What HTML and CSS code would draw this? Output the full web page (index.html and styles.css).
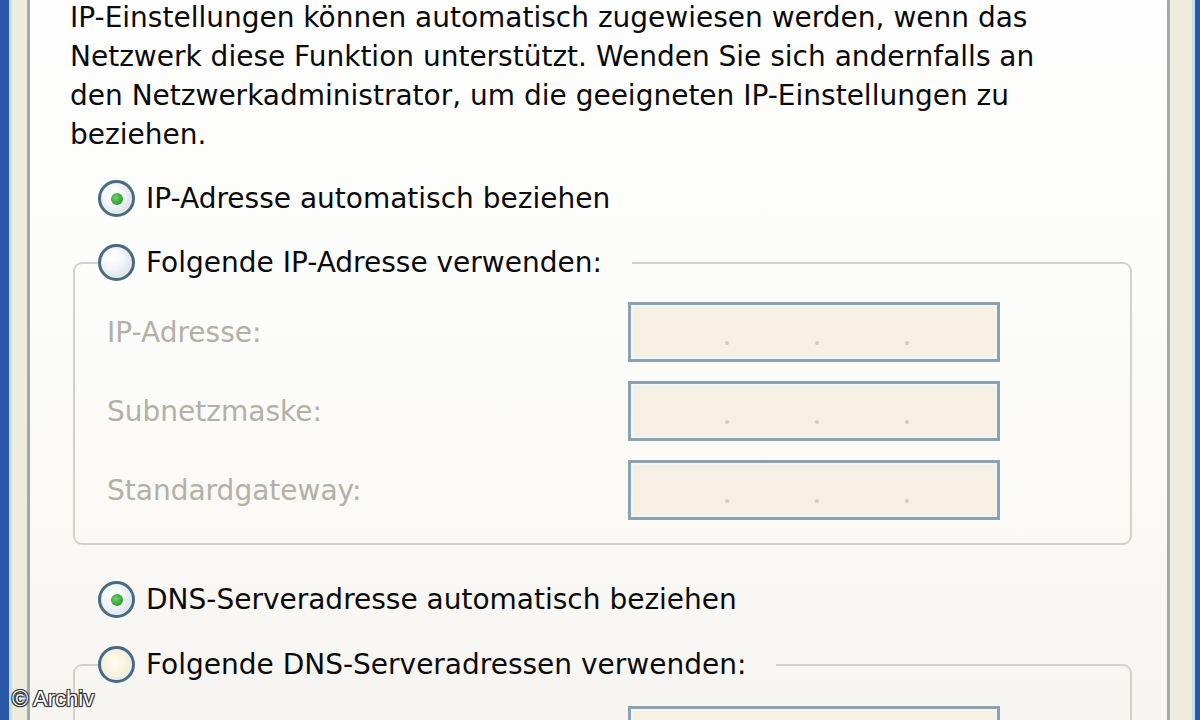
FILE: index.html
```html
<!DOCTYPE html>
<html lang="de">
<head>
<meta charset="utf-8">
<title>Internetprotokoll (TCP/IP)</title>
<link rel="stylesheet" href="styles.css">
</head>
<body>
<div class="outer">
  <div class="frame">
    <main class="page">
      <p class="intro">IP-Einstellungen können automatisch zugewiesen werden, wenn das<br>Netzwerk diese Funktion unterstützt. Wenden Sie sich andernfalls an<br>den Netzwerkadministrator, um die geeigneten IP-Einstellungen zu<br>beziehen.</p>

      <div class="option opt-first"><span class="radio checked"></span><span class="otext">IP-Adresse automatisch beziehen</span></div>

      <fieldset class="group">
        <legend class="option legend"><span class="radio"></span><span class="otext">Folgende IP-Adresse verwenden:</span></legend>
        <div class="fields">
          <span class="flabel">IP-Adresse:</span>
          <div class="ipbox"><span class="seg"></span><span class="dot"></span><span class="seg"></span><span class="dot"></span><span class="seg"></span><span class="dot"></span><span class="seg"></span></div>
          <span class="flabel">Subnetzmaske:</span>
          <div class="ipbox"><span class="seg"></span><span class="dot"></span><span class="seg"></span><span class="dot"></span><span class="seg"></span><span class="dot"></span><span class="seg"></span></div>
          <span class="flabel">Standardgateway:</span>
          <div class="ipbox"><span class="seg"></span><span class="dot"></span><span class="seg"></span><span class="dot"></span><span class="seg"></span><span class="dot"></span><span class="seg"></span></div>
        </div>
      </fieldset>

      <div class="option opt-dns"><span class="radio checked"></span><span class="otext">DNS-Serveradresse automatisch beziehen</span></div>

      <fieldset class="group group-dns">
        <legend class="option legend"><span class="radio hover"></span><span class="otext">Folgende DNS-Serveradressen verwenden:</span></legend>
        <div class="fields fields-dns">
          <span class="flabel"></span>
          <div class="ipbox"><span class="seg"></span><span class="dot"></span><span class="seg"></span><span class="dot"></span><span class="seg"></span><span class="dot"></span><span class="seg"></span></div>
        </div>
      </fieldset>
    </main>
  </div>
</div>
<div class="credit">© Archiv</div>
</body>
</html>
```

FILE: styles.css
```css
html, body {
  margin: 0;
  padding: 0;
  width: 1200px;
  height: 720px;
  overflow: hidden;
}

body {
  position: relative;
  font-family: "DejaVu Sans", Tahoma, Verdana, sans-serif;
  font-size: 28px;
  line-height: 39px;
  color: #0a0a0a;
  background: #ece9d8;
}

.outer {
  height: 720px;
  border-left: 9px solid #2b58a6;
  border-right: 5px solid #2b58a6;
  box-sizing: border-box;
}

.frame {
  height: 100%;
  border-left: 3px solid #c4def2;
  border-right: 3px solid #c4def2;
  background: #efebdf;
  padding-left: 15px;
  padding-right: 22px;
  box-sizing: border-box;
}

.page {
  display: block;
  height: 100%;
  box-sizing: border-box;
  border-left: 3px solid #a4a8a8;
  border-right: 3px solid #a4a8a8;
  background: linear-gradient(#fefefe 0%, #fcfcfa 45%, #f7f5f1 100%);
  padding: 0 32px 0 40px;
  overflow: hidden;
}

.intro {
  margin: -2px 0 0 0;
  white-space: nowrap;
}

.option {
  display: flex;
  align-items: center;
  height: 39px;
  padding-left: 28px;
  white-space: nowrap;
}

.opt-first {
  margin-top: 25px;
}

.opt-dns {
  margin-top: 35px;
}

.otext {
  padding-left: 2px;
}

.radio {
  flex: none;
  position: relative;
  width: 37px;
  height: 37px;
  box-sizing: border-box;
  border-radius: 50%;
  border: 3px solid #4a6a82;
  background: radial-gradient(circle at 38% 36%, #ffffff 0%, #f2f5f8 40%, #dbe3ea 75%, #c9d3dc 100%);
  box-shadow: inset 0 0 0 1px #e8f0f6;
  margin-right: 9px;
}

.radio.hover {
  background: radial-gradient(circle at 45% 45%, #fffdf6 0%, #fbf2dd 45%, #e5e6e2 80%, #cfd8df 100%);
}

.radio.checked::after {
  content: "";
  position: absolute;
  left: 50%;
  top: 50%;
  width: 12px;
  height: 12px;
  margin: -6px 0 0 -6px;
  border-radius: 50%;
  background: radial-gradient(circle at 40% 40%, #6fd36f 0%, #3aa83a 55%, #2a8c2a 100%);
}

.group {
  margin: 25px 3px 0 3px;
  padding: 0;
  border: 2px solid #d2d2c8;
  border-radius: 9px;
  min-width: 0;
}

.group-dns {
  margin-top: 26px;
}

.legend {
  margin-left: 23px;
  padding: 0 30px 0 0;
}

.fields {
  display: grid;
  grid-template-columns: 521px 372px;
  row-gap: 19px;
  padding: 20px 0 23px 32px;
}

.fields-dns {
  padding-top: 22px;
}

.flabel {
  align-self: center;
  color: #b3b0a6;
  white-space: nowrap;
}

.ipbox {
  display: flex;
  height: 60px;
  box-sizing: border-box;
  border: 3px solid #8ca2af;
  box-shadow: inset 0 0 0 2px #eef6fa;
  background: #f6efe3;
  padding: 0 2px 0 8px;
}

.seg {
  flex: 1;
}

.dot {
  flex: none;
  width: 4px;
  height: 4px;
  margin-top: 36px;
  border-radius: 50%;
  background: #d3c9b8;
}

.credit {
  position: absolute;
  left: 12px;
  top: 686px;
  font-family: "Liberation Sans", Arial, sans-serif;
  font-size: 22px;
  line-height: 26px;
  color: #ffffff;
  text-shadow: 1px 1px 0 #333, -1px -1px 0 #333, 1px -1px 0 #333, -1px 1px 0 #333, 0 1px 1px #333;
}
```
